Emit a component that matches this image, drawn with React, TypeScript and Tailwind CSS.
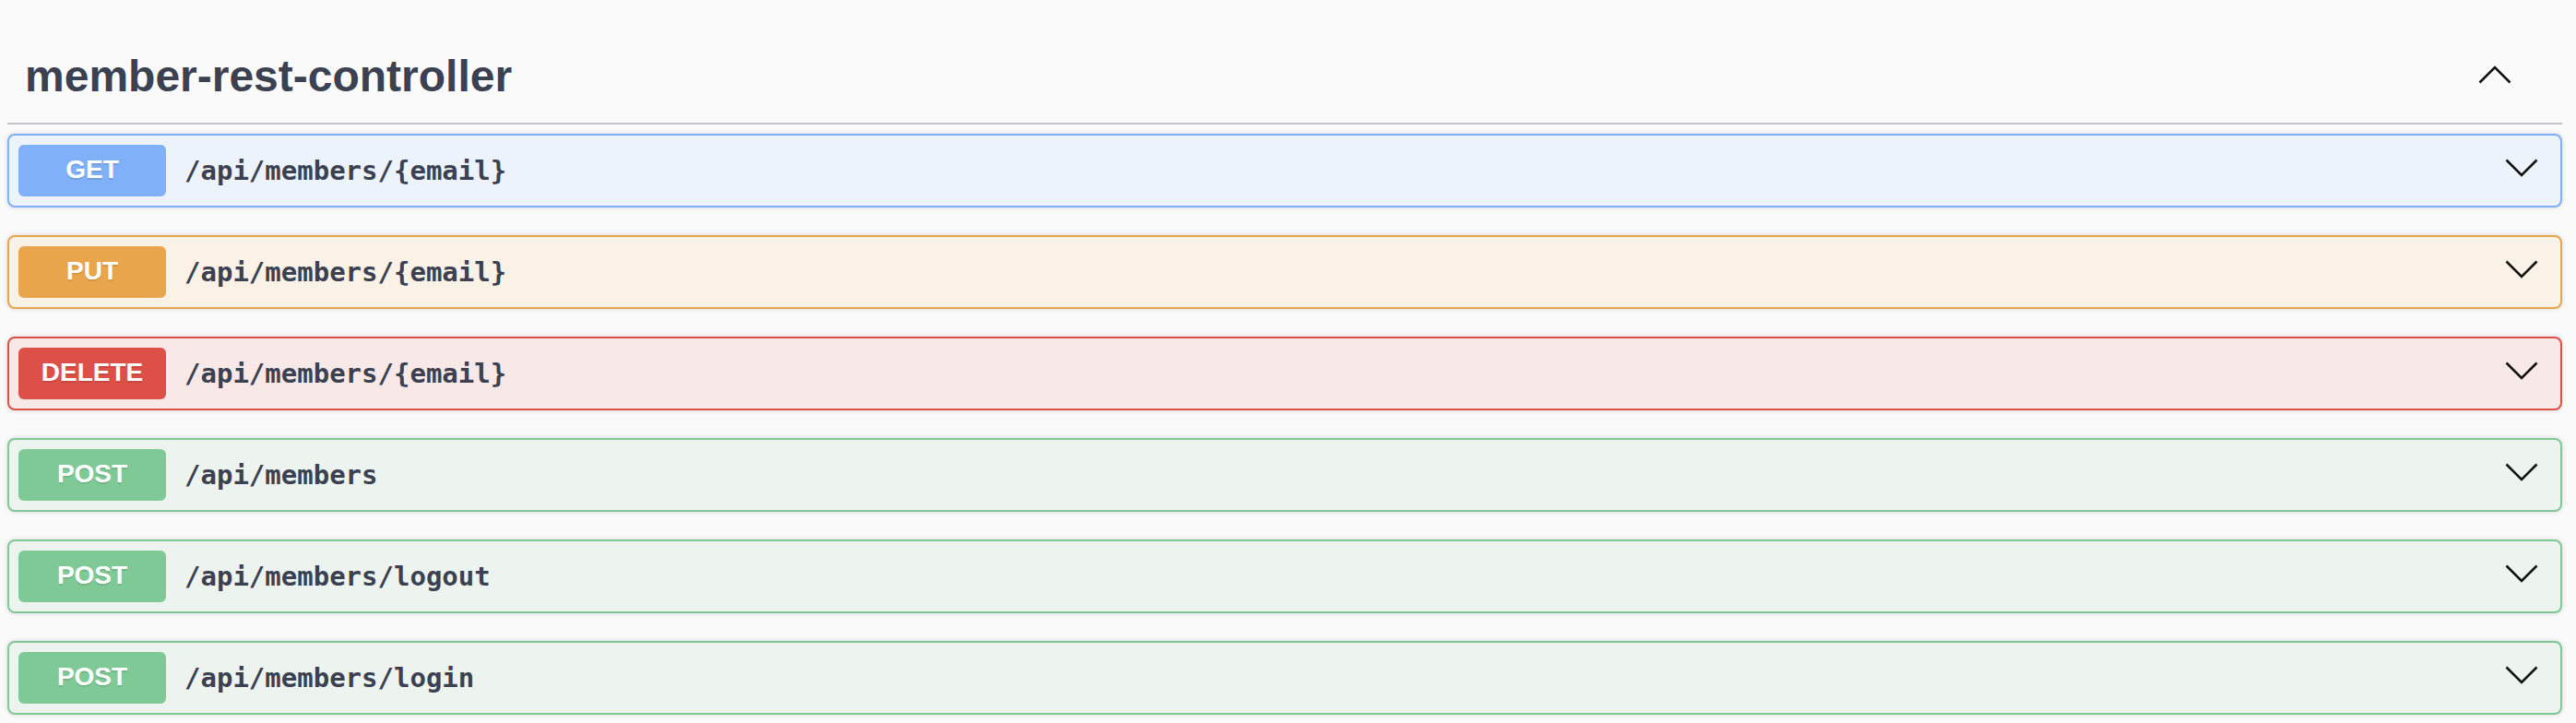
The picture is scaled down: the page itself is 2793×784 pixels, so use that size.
type Op = {
  method: string;
  path: string;
  badge: string;
  row: string;
};

const ops: Op[] = [
  { method: "GET", path: "/api/members/{email}", badge: "bg-[#80b0f7]", row: "bg-[#edf3fb] border-[#80b0f7]" },
  { method: "PUT", path: "/api/members/{email}", badge: "bg-[#e8a54c]", row: "bg-[#faf1e7] border-[#e8a54c]" },
  { method: "DELETE", path: "/api/members/{email}", badge: "bg-[#dd5048]", row: "bg-[#f8e8e7] border-[#dd5048]" },
  { method: "POST", path: "/api/members", badge: "bg-[#7ec995]", row: "bg-[#edf4ef] border-[#7ec995]" },
  { method: "POST", path: "/api/members/logout", badge: "bg-[#7ec995]", row: "bg-[#edf4ef] border-[#7ec995]" },
  { method: "POST", path: "/api/members/login", badge: "bg-[#7ec995]", row: "bg-[#edf4ef] border-[#7ec995]" },
];

function Chevron({ up, className }: { up?: boolean; className?: string }) {
  return (
    <svg width="36" height="20" viewBox="0 0 36 20" fill="none" className={className}>
      <polyline
        points={up ? "1.5,18.5 18,2 34.5,18.5" : "1.5,1.5 18,18 34.5,1.5"}
        stroke="#111"
        strokeWidth="2.6"
      />
    </svg>
  );
}

function OpRow({ op }: { op: Op }) {
  return (
    <div
      className={`flex h-[80px] items-center rounded-[8px] border-2 pl-[10px] pr-[24px] shadow-[0_0_5px_rgba(0,0,0,0.15)] ${op.row}`}
    >
      <span
        className={`flex h-[56px] w-[160px] shrink-0 items-center justify-center rounded-[6px] pb-[2px] font-['Liberation_Sans',Arial,sans-serif] text-[28px] leading-none font-bold text-white text-shadow-[0_2px_0_rgba(0,0,0,0.1)] ${op.badge}`}
      >
        {op.method}
      </span>
      <span className="ml-5 flex-1 font-['DejaVu_Sans_Mono',monospace] text-[29px] leading-none font-semibold text-[#3b4151]">
        {op.path}
      </span>
      <Chevron className="mb-[6px] shrink-0" />
    </div>
  );
}

export default function App() {
  return (
    <div className="min-h-screen bg-[#fafafa] pl-2 pr-[15px]">
      <div className="flex items-center justify-between border-b-2 border-[#c3c4c8] pt-[59px] pb-[26px] pl-[19px] pr-[55px]">
        <h3 className="font-['Liberation_Sans',Arial,sans-serif] text-[48px] leading-none font-bold text-[#3b4151]">
          member-rest-controller
        </h3>
        <Chevron up className="mb-1" />
      </div>
      <div className="mt-[10px] flex flex-col gap-[30px]">
        {ops.map((op, i) => (
          <OpRow key={i} op={op} />
        ))}
      </div>
    </div>
  );
}
